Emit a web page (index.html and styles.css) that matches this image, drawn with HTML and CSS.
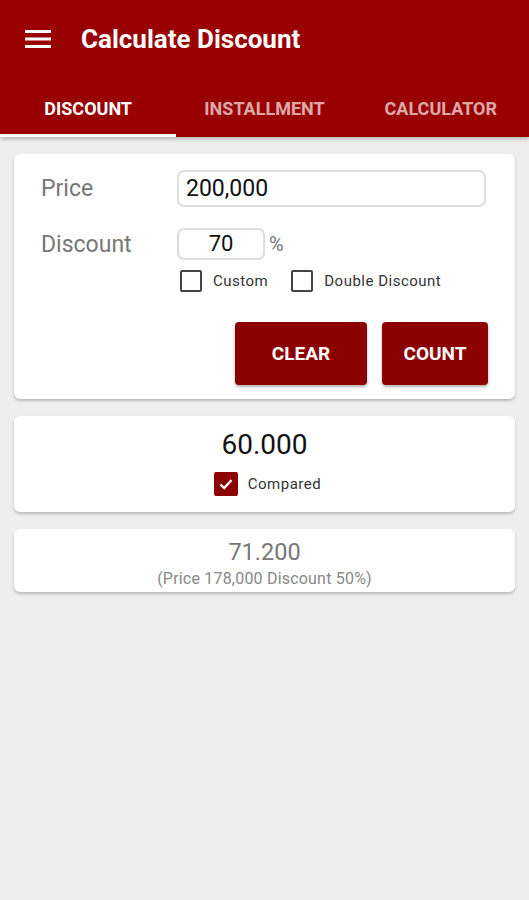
FILE: index.html
```html
<!DOCTYPE html>
<html lang="en">
<head>
  <meta charset="UTF-8">
  <meta name="viewport" content="width=device-width, initial-scale=1">
  <title>Calculate Discount</title>
  <link rel="stylesheet" href="styles.css">
</head>
<body>
  <header class="appbar">
    <div class="toolbar">
      <svg class="menu-icon" width="26" height="18" viewBox="0 0 26 18">
        <rect x="0" y="0" width="26" height="3" fill="#fff"/>
        <rect x="0" y="7.5" width="26" height="3" fill="#fff"/>
        <rect x="0" y="15" width="26" height="3" fill="#fff"/>
      </svg>
      <h1>Calculate Discount</h1>
    </div>
    <nav class="tabs">
      <div class="tab active">DISCOUNT</div>
      <div class="tab">INSTALLMENT</div>
      <div class="tab">CALCULATOR</div>
    </nav>
  </header>

  <main>
    <section class="card form-card">
      <div class="row">
        <span class="label">Price</span>
        <div class="field wide">200,000</div>
      </div>
      <div class="row">
        <span class="label">Discount</span>
        <div class="field small">70</div>
        <span class="unit">%</span>
      </div>
      <div class="checks">
        <label class="check"><span class="box"></span>Custom</label>
        <label class="check"><span class="box"></span>Double Discount</label>
      </div>
      <div class="actions">
        <button class="btn clear">CLEAR</button>
        <button class="btn count">COUNT</button>
      </div>
    </section>

    <section class="card result-card">
      <div class="result">60.000</div>
      <label class="check compared">
        <span class="box checked">
          <svg width="16" height="16" viewBox="0 0 16 16"><path d="M2.5 8.5 L6.2 12 L13.5 4" fill="none" stroke="#fff" stroke-width="2.4"/></svg>
        </span>Compared
      </label>
    </section>

    <section class="card compare-card">
      <div class="compare-value">71.200</div>
      <div class="compare-note">(Price 178,000 Discount 50%)</div>
    </section>
  </main>
</body>
</html>
```

FILE: styles.css
```css
:root {
  --primary: #990000;
  --button: #8b0000;
  --bg: #eeeeee;
  --label: #777777;
}

body {
  margin: 0;
  background-color: var(--bg);
  font-family: Roboto, "Liberation Sans", sans-serif;
  width: 529px;
  height: 900px;
  overflow: hidden;
}

.appbar {
  background-color: var(--primary);
  color: white;
  box-shadow: 0 2px 4px rgba(0,0,0,0.25);
}

.toolbar {
  height: 80px;
  display: flex;
  align-items: center;
  padding-left: 25px;
}

.menu-icon {
  margin-top: -2px;
}

.toolbar h1 {
  margin: -2px 0 0 30px;
  font-size: 26px;
  font-weight: 700;
}

.tabs {
  display: flex;
  height: 57px;
}

.tab {
  flex: 1;
  display: flex;
  align-items: center;
  justify-content: center;
  font-size: 18px;
  font-weight: 700;
  color: rgba(255,255,255,0.68);
  border-bottom: 3px solid transparent;
  box-sizing: border-box;
  padding-top: 2px;
}

.tab.active {
  color: white;
  border-bottom-color: white;
}

main {
  padding: 17px 14px 0 14px;
  display: flex;
  flex-direction: column;
  gap: 17px;
}

.card {
  background-color: white;
  border-radius: 6px;
  box-shadow: 0 2px 3px rgba(0,0,0,0.22);
}

.form-card {
  padding: 16px 27px 14px 27px;
}

.row {
  display: flex;
  align-items: center;
  margin-bottom: 21px;
}

.row:nth-child(2) {
  margin-bottom: 10px;
}

.label {
  width: 136px;
  font-size: 23px;
  color: var(--label);
}

.field {
  border: 2px solid #dddddd;
  border-radius: 7px;
  font-size: 23px;
  color: #111;
  box-sizing: border-box;
}

.field.wide {
  flex: 1;
  height: 37px;
  line-height: 33px;
  padding-left: 7px;
  margin-right: 2px;
}

.field.small {
  width: 88px;
  height: 32px;
  line-height: 28px;
  text-align: center;
  font-size: 22px;
}

.unit {
  font-size: 20px;
  color: var(--label);
  margin-left: 4px;
}

.checks {
  display: flex;
  gap: 23px;
  margin-left: 139px;
}

.check {
  display: flex;
  align-items: center;
  font-size: 15px;
  letter-spacing: 0.5px;
  color: #333;
}

.box {
  width: 18px;
  height: 18px;
  border: 2px solid #444;
  border-radius: 2px;
  margin-right: 11px;
  display: flex;
  align-items: center;
  justify-content: center;
}

.box.checked {
  background-color: var(--button);
  border-color: var(--button);
  width: 20px;
  height: 20px;
}

.actions {
  display: flex;
  justify-content: flex-end;
  gap: 15px;
  margin-top: 30px;
}

.btn {
  height: 63px;
  border: none;
  border-radius: 4px;
  background-color: var(--button);
  color: white;
  font-family: Roboto, "Liberation Sans", sans-serif;
  font-size: 19px;
  font-weight: 700;
  box-shadow: 0 2px 3px rgba(0,0,0,0.3);
}

.btn.clear {
  width: 132px;
}

.btn.count {
  width: 106px;
}

.result-card {
  height: 96px;
  display: flex;
  flex-direction: column;
  align-items: center;
  box-sizing: border-box;
  padding-top: 12px;
}

.result {
  font-size: 28px;
  color: #111;
  margin-bottom: 11px;
}

.compared {
  margin-left: 6px;
}

.compared .box {
  margin-right: 10px;
}

.compare-card {
  height: 63px;
  display: flex;
  flex-direction: column;
  align-items: center;
  box-sizing: border-box;
  padding-top: 9px;
}

.compare-value {
  font-size: 23.5px;
  color: #777;
}

.compare-note {
  font-size: 16px;
  letter-spacing: 0.2px;
  color: #888;
  margin-top: 3px;
}
```
